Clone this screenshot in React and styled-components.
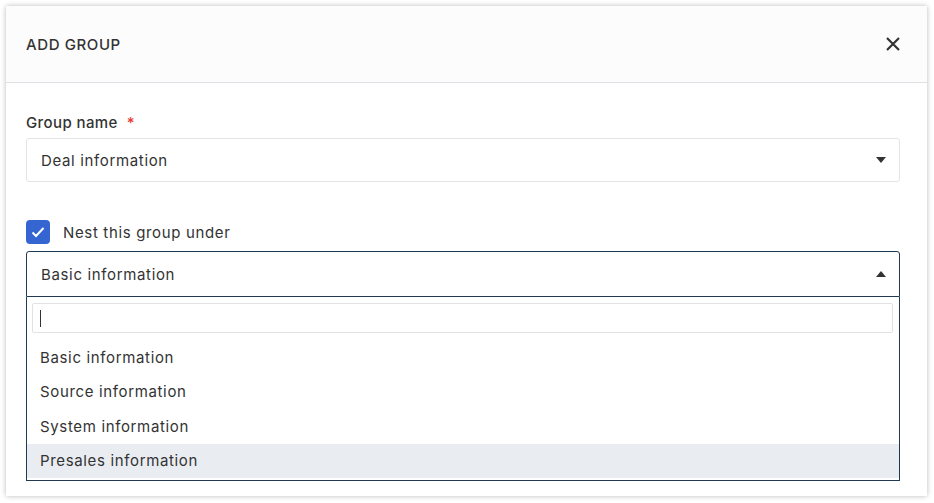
import React, { useState } from 'react';
import styled, { createGlobalStyle } from 'styled-components';

const GlobalStyle = createGlobalStyle`
  body {
    margin: 0;
    background: #ffffff;
    font-family: 'Inter', 'Liberation Sans', sans-serif;
    color: #333333;
  }
`;

const Page = styled.div`
  padding: 6px 7px 7px 6px;
`;

const Modal = styled.div`
  width: 921px;
  height: 490px;
  background: #ffffff;
  box-shadow: 0 0 5px rgba(0, 0, 0, 0.28);
  display: flex;
  flex-direction: column;
`;

const Header = styled.div`
  height: 77px;
  box-sizing: border-box;
  background: #fcfcfc;
  border-bottom: 1px solid #dcdfe3;
  display: flex;
  align-items: center;
  justify-content: space-between;
  padding: 0 26px 0 20px;
`;

const Title = styled.h2`
  margin: 0;
  font-size: 15px;
  font-weight: 500;
  letter-spacing: 0.6px;
  color: #333333;
  text-transform: uppercase;
`;

const CloseButton = styled.button`
  border: none;
  background: none;
  padding: 0;
  display: flex;
  cursor: pointer;
`;

const Body = styled.div`
  padding: 31px 27px 0 20px;
  display: flex;
  flex-direction: column;
  letter-spacing: 0.65px;
`;

const Label = styled.label`
  font-size: 15px;
  font-weight: 500;
  color: #333333;
  line-height: 18px;
  margin-bottom: 6px;
  letter-spacing: 0.4px;
`;

const Required = styled.span`
  color: #e53935;
  margin-left: 9px;
`;

const Field = styled.div`
  height: ${(p) => (p.$open ? '46px' : '44px')};
  box-sizing: border-box;
  border: 1px solid ${(p) => (p.$open ? '#1f3a52' : '#e4e4e4')};
  border-radius: ${(p) => (p.$open ? '3px 3px 0 0' : '3px')};
  display: flex;
  align-items: center;
  justify-content: space-between;
  padding: 0 13px 0 14px;
  font-size: 15px;
  color: #333333;
`;

const Caret = styled.span`
  width: 0;
  height: 0;
  border-left: 5px solid transparent;
  border-right: 5px solid transparent;
  ${(p) => (p.$up ? 'border-bottom: 6px solid #333;' : 'border-top: 6px solid #333;')}
`;

const CheckRow = styled.div`
  display: flex;
  align-items: center;
  gap: 13px;
  margin-top: 38px;
  margin-bottom: 7px;
  font-size: 15px;
  color: #333333;
`;

const CheckBox = styled.span`
  width: 24px;
  height: 24px;
  border-radius: 4px;
  background: #3565d0;
  display: flex;
  align-items: center;
  justify-content: center;
`;

const Menu = styled.div`
  border: 1px solid #1f3a52;
  border-top: none;
  height: 184px;
  box-sizing: border-box;
  padding-top: 6px;
`;

const Search = styled.div`
  margin: 0 6px 0 5px;
  height: 30px;
  box-sizing: border-box;
  border: 1px solid #e2e2e2;
  border-radius: 2px;
  display: flex;
  align-items: center;
  padding-left: 7px;
`;

const Cursor = styled.span`
  width: 1px;
  height: 17px;
  background: #333;
`;

const Options = styled.div`
  margin-top: 7px;
  display: flex;
  flex-direction: column;
`;

const Option = styled.div`
  height: 34.5px;
  display: flex;
  align-items: center;
  padding-left: 13px;
  font-size: 15px;
  color: #333333;
  background: ${(p) => (p.$active ? '#e9edf2' : 'transparent')};
`;

const options = ['Basic information', 'Source information', 'System information', 'Presales information'];

export default function App() {
  const [active] = useState(3);
  return (
    <Page>
      <GlobalStyle />
      <Modal>
        <Header>
          <Title>Add group</Title>
          <CloseButton>
            <svg width="16" height="16" viewBox="0 0 16 16">
              <path d="M2 2L14 14M14 2L2 14" stroke="#333" strokeWidth="2.2" />
            </svg>
          </CloseButton>
        </Header>
        <Body>
          <Label>
            Group name<Required>*</Required>
          </Label>
          <Field>
            Deal information
            <Caret />
          </Field>
          <CheckRow>
            <CheckBox>
              <svg width="14" height="12" viewBox="0 0 14 12">
                <path d="M1.5 6.5L5 10L12.5 2" fill="none" stroke="#fff" strokeWidth="2" />
              </svg>
            </CheckBox>
            Nest this group under
          </CheckRow>
          <Field $open>
            Basic information
            <Caret $up />
          </Field>
          <Menu>
            <Search>
              <Cursor />
            </Search>
            <Options>
              {options.map((o, i) => (
                <Option key={o} $active={i === active}>
                  {o}
                </Option>
              ))}
            </Options>
          </Menu>
        </Body>
      </Modal>
    </Page>
  );
}
